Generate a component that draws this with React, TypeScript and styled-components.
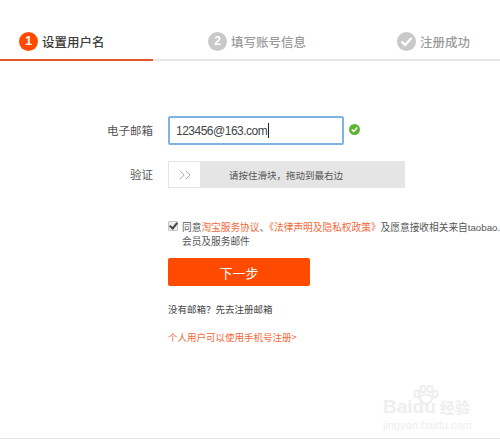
import { ChevronsRight } from 'lucide-react';
import styled, { createGlobalStyle } from 'styled-components';

const GlobalStyle = createGlobalStyle`
  html, body {
    margin: 0;
    padding: 0;
    background: #fff;
    overflow: hidden;
  }
  body {
    font-family: "Noto Sans CJK SC", "Liberation Sans", sans-serif;
    color: #3c3c3c;
  }
`;

const Page = styled.div`
  position: relative;
  width: 500px;
  height: 439px;
  overflow: hidden;
  border-bottom: 1px solid #e6e6e6;
  box-sizing: border-box;
`;

const Steps = styled.div`
  display: grid;
  grid-template-columns: 153px 153px 194px;
  height: 61px;
`;

const Step = styled.div<{ $active?: boolean; $indent: number }>`
  display: flex;
  align-items: center;
  gap: 4px;
  height: 61px;
  padding: 23px 0 0 ${(p) => p.$indent}px;
  box-sizing: border-box;
  border-bottom: 2px solid ${(p) => (p.$active ? '#e4572c' : '#e8e8e8')};
  font-size: 12.5px;
  font-weight: 500;
  white-space: nowrap;
  color: ${(p) => (p.$active ? '#3c3c3c' : '#9b9b9b')};
`;

const StepDot = styled.span<{ $active?: boolean }>`
  display: flex;
  flex: none;
  align-items: center;
  justify-content: center;
  width: 19px;
  height: 19px;
  border-radius: 50%;
  background: ${(p) => (p.$active ? '#ff4a00' : '#c9c9c9')};
  color: #fff;
  font: bold 12px "Liberation Sans", sans-serif;
`;

const Form = styled.div`
  display: flex;
  flex-direction: column;
  padding-top: 55px;
`;

const Row = styled.div<{ $gap?: number }>`
  display: flex;
  align-items: center;
  gap: 15px;
  margin-bottom: ${(p) => p.$gap ?? 0}px;
`;

const Label = styled.div`
  width: 153px;
  text-align: right;
  font-size: 11.5px;
  line-height: 16px;
  margin-top: -2px;
  color: #555;
`;

const InputBox = styled.div`
  display: flex;
  align-items: center;
  width: 176px;
  height: 29px;
  box-sizing: border-box;
  padding-left: 6px;
  border: 2px solid #7fb2e5;
  border-radius: 2px;
  font: 12px "Liberation Sans", sans-serif;
  letter-spacing: -0.5px;
  color: #444;
`;

const Caret = styled.span`
  width: 1px;
  height: 15px;
  margin-left: 1px;
  background: #222;
`;

const OkIcon = styled.svg`
  display: block;
  margin-left: -10px;
  margin-top: -3px;
`;

const Slider = styled.div`
  display: flex;
  align-items: center;
  width: 237px;
  height: 27px;
  background: #e5e5e5;
`;

const Handle = styled.div`
  display: flex;
  align-items: center;
  justify-content: center;
  width: 33px;
  height: 27px;
  box-sizing: border-box;
  background: #fff;
  border: 1px solid #e5e5e5;
  color: #aaa;
`;

const SliderHint = styled.div`
  flex: 1;
  padding-right: 34px;
  text-align: center;
  font-size: 9.5px;
  color: #555;
`;

const Agreement = styled.div`
  display: flex;
  margin: 33px 0 0 168px;
  gap: 4px;
`;

const Check = styled.input`
  position: relative;
  appearance: none;
  width: 10px;
  height: 10px;
  margin: 0;
  flex: none;
  box-sizing: border-box;
  background: #eee;
  border: 1px solid #c4c4c4;
  border-radius: 1px;

  &::after {
    content: '';
    position: absolute;
    left: 2px;
    top: -1px;
    width: 3px;
    height: 6px;
    border: solid #444;
    border-width: 0 2px 2px 0;
    transform: rotate(40deg);
  }
`;

const AgreementText = styled.div`
  flex: none;
  font-family: "Liberation Sans", "Noto Sans CJK SC", sans-serif;
  font-size: 9.7px;
  line-height: 14px;
  color: #555;
  white-space: nowrap;
`;

const Orange = styled.span`
  color: #f2683a;
`;

const NextButton = styled.button`
  display: block;
  width: 142px;
  height: 28px;
  margin: 9px 0 0 168px;
  padding: 0;
  border: 0;
  border-radius: 2px;
  background: #ff4a00;
  color: #fff;
  font: 13px "Noto Sans CJK SC", sans-serif;
`;

const Note = styled.div<{ $orange?: boolean; $top: number }>`
  margin: ${(p) => p.$top}px 0 0 168px;
  font-size: 9.5px;
  line-height: 14px;
  color: ${(p) => (p.$orange ? '#f2683a' : '#444')};
  white-space: nowrap;
`;

const Watermark = styled.div`
  position: absolute;
  left: 383px;
  top: 385px;
  color: #eeeeee;
  white-space: nowrap;
`;

const WatermarkPaw = styled.svg`
  display: block;
  margin-left: 30px;
  margin-bottom: -8px;
`;

const WatermarkName = styled.div`
  display: flex;
  align-items: center;
  gap: 4px;
  height: 20px;
  font: bold 19px/20px "Liberation Sans", sans-serif;
`;

const WatermarkCn = styled.span`
  font: bold 15px/18px "Noto Sans CJK SC", sans-serif;
`;

const WatermarkSub = styled.div`
  margin-top: 2px;
  font: 11px/12px "Liberation Sans", sans-serif;
`;

export default function App() {
  return (
    <Page>
      <GlobalStyle />
      <Steps>
        <Step $active $indent={19}>
          <StepDot $active>1</StepDot>
          设置用户名
        </Step>
        <Step $indent={55}>
          <StepDot>2</StepDot>
          填写账号信息
        </Step>
        <Step $indent={91}>
          <StepDot>
            <svg width="13" height="11" viewBox="0 0 13 11">
              <path d="M1.5 5.5 5 9l6.5-7" fill="none" stroke="#fff" strokeWidth="2.4" />
            </svg>
          </StepDot>
          注册成功
        </Step>
      </Steps>
      <Form>
        <Row $gap={16}>
          <Label>电子邮箱</Label>
          <InputBox>
            123456@163.com
            <Caret />
          </InputBox>
          <OkIcon width="11" height="11" viewBox="0 0 11 11">
            <circle cx="5.5" cy="5.5" r="5.5" fill="#5cb531" />
            <path d="M2.8 5.5 4.8 7.5 8.3 3.6" fill="none" stroke="#fff" strokeWidth="1.5" />
          </OkIcon>
        </Row>
        <Row>
          <Label>验证</Label>
          <Slider>
            <Handle>
              <ChevronsRight size={20} strokeWidth={1.2} />
            </Handle>
            <SliderHint>请按住滑块，拖动到最右边</SliderHint>
          </Slider>
        </Row>
        <Agreement>
          <Check type="checkbox" defaultChecked />
          <AgreementText>
            同意<Orange>淘宝服务协议</Orange>、<Orange>《法律声明及隐私权政策》</Orange>及愿意接收相关来自taobao.com的
            <br />
            会员及服务邮件
          </AgreementText>
        </Agreement>
        <NextButton>下一步</NextButton>
        <Note $top={16}>没有邮箱？先去注册邮箱</Note>
        <Note $orange $top={14}>
          个人用户可以使用手机号注册&gt;
        </Note>
      </Form>
      <Watermark>
        <WatermarkPaw width="26" height="20" viewBox="0 0 26 20">
          <g fill="none" stroke="#eeeeee" strokeWidth="2">
            <ellipse cx="4" cy="9" rx="2.6" ry="3.4" />
            <ellipse cx="10" cy="4" rx="2.6" ry="3.2" />
            <ellipse cx="17" cy="4" rx="2.6" ry="3.2" />
            <ellipse cx="22" cy="9" rx="2.6" ry="3.4" />
            <ellipse cx="13" cy="14" rx="6" ry="4.5" />
          </g>
        </WatermarkPaw>
        <WatermarkName>
          Baidu
          <WatermarkCn>经验</WatermarkCn>
        </WatermarkName>
        <WatermarkSub>jingyan.baidu.com</WatermarkSub>
      </Watermark>
    </Page>
  );
}
